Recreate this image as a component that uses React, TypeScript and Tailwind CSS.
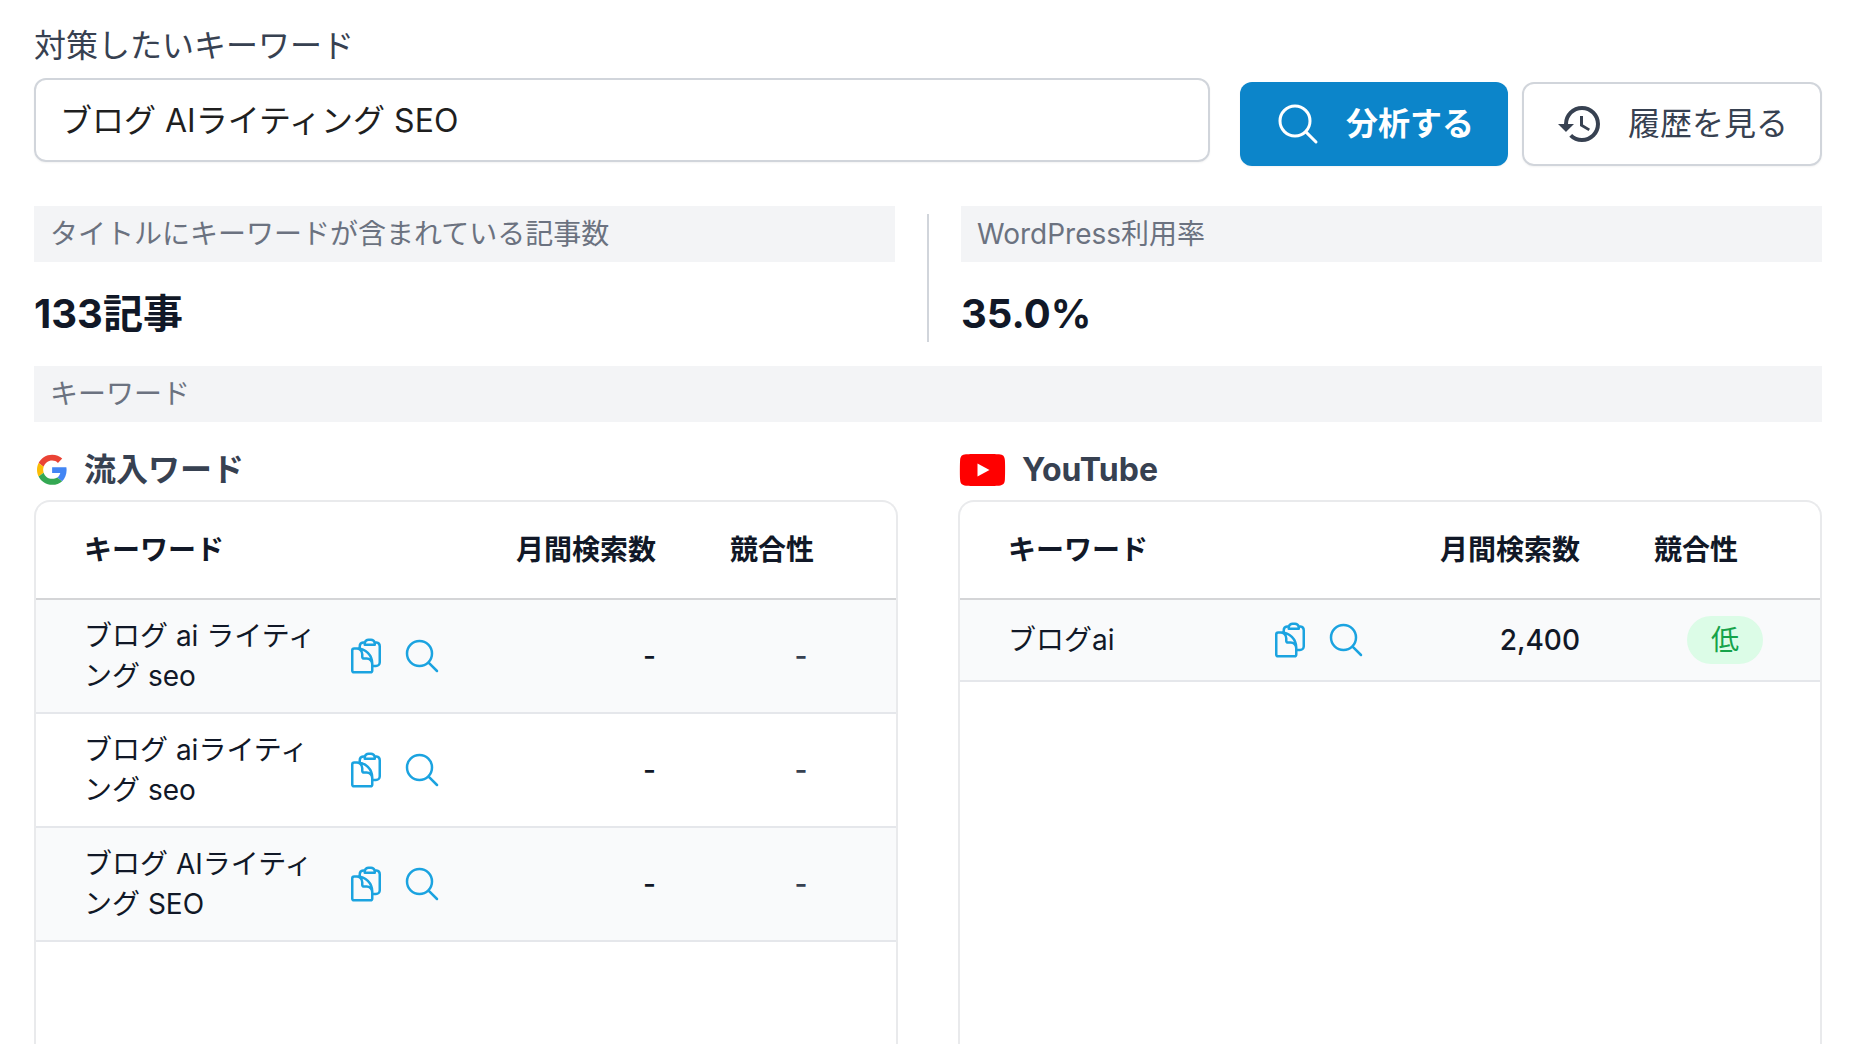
import React from "react";
import { MdHistory } from "react-icons/md";
import { HiOutlineClipboardDocument, HiOutlineMagnifyingGlass } from "react-icons/hi2";

type Row = { keyword: string; volume: string; competition?: string };

const googleRows: Row[] = [
  { keyword: "ブログ ai ライティング seo", volume: "-" },
  { keyword: "ブログ aiライティング seo", volume: "-" },
  { keyword: "ブログ AIライティング SEO", volume: "-" },
];

const youtubeRows: Row[] = [{ keyword: "ブログai", volume: "2,400", competition: "低" }];

function GoogleLogo() {
  return (
    <svg viewBox="0 0 48 48" className="mr-3.5 size-9" aria-hidden="true">
      <g transform="translate(4 3.500) scale(.84)">
        <path fill="#EA4335" d="M24 9.500c3.540 0 6.710 1.220 9.210 3.600l6.850-6.850C35.900 2.380 30.470 0 24 0 14.620 0 6.510 5.380 2.560 13.220l7.980 6.190C12.430 13.720 17.740 9.500 24 9.500z" />
        <path fill="#4285F4" d="M46.980 24.550c0-1.570-.15-3.090-.38-4.550H24v9.020h12.940c-.58 2.960-2.260 5.480-4.780 7.180l7.730 6c4.510-4.180 7.090-10.360 7.090-17.650z" />
        <path fill="#FBBC05" d="M10.530 28.590c-.48-1.450-.76-2.990-.76-4.590s.27-3.140.76-4.590l-7.980-6.190C.92 16.460 0 20.120 0 24c0 3.880.92 7.540 2.560 10.780l7.970-6.190z" />
        <path fill="#34A853" d="M24 48c6.480 0 11.930-2.130 15.890-5.810l-7.730-6c-2.150 1.450-4.920 2.300-8.160 2.300-6.260 0-11.570-4.220-13.470-9.910l-7.980 6.190C6.510 42.620 14.620 48 24 48z" />
      </g>
    </svg>
  );
}

function YouTubeLogo() {
  return (
    <svg viewBox="0 0 48 36" className="mr-4 h-9 w-12" aria-hidden="true">
      <path
        fill="#ff0000"
        d="M8 2.200C13 1.900 36 1.900 41 2.200c4.200.4 5.600 1.900 5.900 6 .3 5 .3 14.400 0 19.400-.3 4.200-1.700 5.700-5.900 6.100-5 .3-28 .3-33 0-4.200-.4-5.600-1.900-5.900-6.100-.3-5-.3-14.400 0-19.400.3-4.100 1.700-5.600 5.900-6z"
      />
      <path fill="#ffffff" d="M19.500 11.400v13.200l12-6.600z" />
    </svg>
  );
}

function Band({ children }: { children: React.ReactNode }) {
  return <h2 className="bg-gray-100 px-4 py-2 text-[28px] leading-10 text-[#6b7280]">{children}</h2>;
}

function Stat({ label, value }: { label: string; value: string }) {
  return (
    <div className="flex-1">
      <Band>{label}</Band>
      <p className="pt-7 pb-1 text-[40px] leading-[48px] font-bold text-[#111827]">{value}</p>
    </div>
  );
}

function KeywordTable({ rows, title, icon }: { rows: Row[]; title: string; icon: React.ReactNode }) {
  return (
    <section className="flex min-w-0 flex-1 flex-col">
      <h3 className="flex items-center text-[32px] leading-[48px] font-bold text-[#374151]">
        {icon}
        {title}
      </h3>
      <div className="mt-1.5 flex-1 overflow-hidden rounded-t-2xl border-2 border-b-0 border-[#e9eaec]">
        <table className="w-full table-fixed text-[28px] leading-10 text-[#111827]">
          <thead>
            <tr className="border-b-2 border-[#d4d5d7]">
              <th className="py-7 pl-12 text-left font-bold">キーワード</th>
              <th className="w-[216px] py-7 pr-[50px] text-right font-bold">月間検索数</th>
              <th className="w-[190px] py-7 pl-6 text-left font-bold">競合性</th>
            </tr>
          </thead>
          <tbody>
            {rows.map((row) => (
              <tr key={row.keyword} className="border-b-2 border-[#e5e7eb] odd:bg-[#f9fafb]">
                <td className="px-12 py-4">
                  <div className="flex items-center gap-6">
                    <span className="min-w-0 flex-1">{row.keyword}</span>
                    <span className="flex gap-4 text-[#1ba3e0]">
                      <button type="button" aria-label="コピー">
                        <HiOutlineClipboardDocument className="size-10" />
                      </button>
                      <button type="button" aria-label="検索">
                        <HiOutlineMagnifyingGlass className="size-10" />
                      </button>
                    </span>
                  </div>
                </td>
                <td className="py-4 pr-[50px] text-right font-medium">{row.volume}</td>
                <td className="py-4 text-center text-[#374151]">
                  {row.competition ? (
                    <span className="inline-block rounded-full bg-[#dcfce7] px-6 py-1 align-top text-[#16a34a]">
                      {row.competition}
                    </span>
                  ) : (
                    <span className="font-medium">-</span>
                  )}
                </td>
              </tr>
            ))}
          </tbody>
        </table>
      </div>
    </section>
  );
}

export default function App() {
  return (
    <main className="flex min-h-screen flex-col bg-white px-[34px] pt-[22px] font-['Inter','Noto_Sans_CJK_JP',sans-serif]">
      <form className="flex items-end" onSubmit={(e) => e.preventDefault()}>
        <div className="mr-[30px] flex-1 pb-1">
          <label htmlFor="keyword" className="block text-[32px] leading-[48px] text-[#374151]">
            対策したいキーワード
          </label>
          <input
            id="keyword"
            type="text"
            defaultValue="ブログ AIライティング SEO"
            className="mt-2 block h-[84px] w-full rounded-xl border-2 border-[#d1d5db] px-6 pb-1 text-[32px] text-[#1f1f1f] shadow-xs"
          />
        </div>
        <button
          type="submit"
          className="mr-3.5 flex h-[84px] items-center gap-6 rounded-xl bg-[#0c85ca] px-[34px] text-[32px] font-bold text-white shadow-xs"
        >
          <HiOutlineMagnifyingGlass className="size-12" />
          分析する
        </button>
        <button
          type="button"
          className="flex h-[84px] items-center gap-6 rounded-xl border-2 border-[#d1d5db] px-8 text-[32px] text-[#374151] shadow-xs"
        >
          <MdHistory className="size-12" />
          履歴を見る
        </button>
      </form>

      <div className="mt-10 mb-6 flex">
        <Stat label="タイトルにキーワードが含まれている記事数" value="133記事" />
        <div className="mx-8 mt-2 w-0.5 bg-[#d1d5db]" />
        <Stat label="WordPress利用率" value="35.0%" />
      </div>

      <Band>キーワード</Band>

      <div className="mt-6 flex flex-1 gap-[60px]">
        <KeywordTable title="流入ワード" rows={googleRows} icon={<GoogleLogo />} />
        <KeywordTable title="YouTube" rows={youtubeRows} icon={<YouTubeLogo />} />
      </div>
    </main>
  );
}
